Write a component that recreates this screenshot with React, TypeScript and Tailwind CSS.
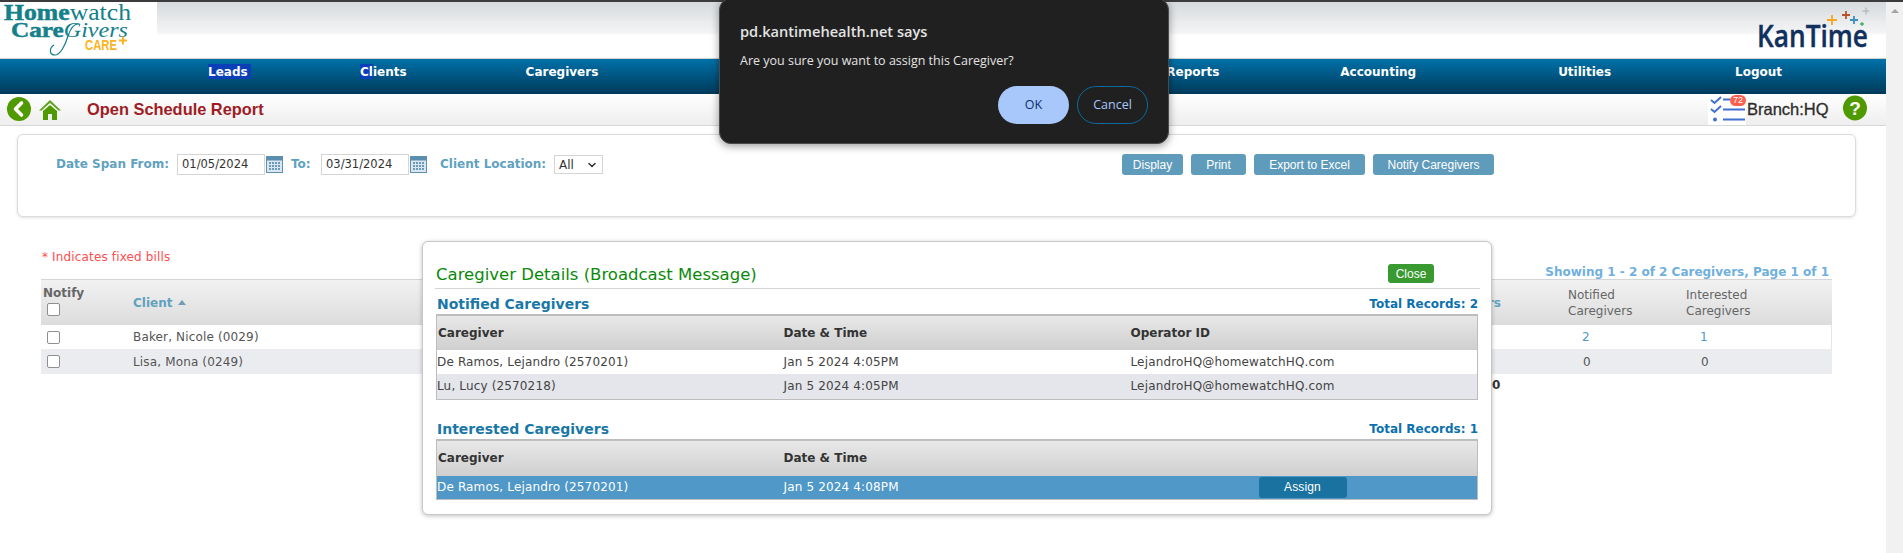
import React from "react";
import { ChevronDown } from "lucide-react";

const body = "font-['DejaVu_Sans',sans-serif]";

function HomewatchLogo() {
  return (
    <svg width="157" height="55" viewBox="0 0 157 55" className="block overflow-visible">
      <text x="4" y="17" fontFamily="Liberation Serif, serif" fontSize="23" fill="#14808a" textLength="127" lengthAdjust="spacingAndGlyphs">
        <tspan fontWeight="700" stroke="#14808a" strokeWidth="0.5">Home</tspan>
        <tspan>watch</tspan>
      </text>
      <text x="11" y="34" fontFamily="Liberation Serif, serif" fontSize="22" fill="#14808a" textLength="117" lengthAdjust="spacingAndGlyphs">
        <tspan fontWeight="700" stroke="#14808a" strokeWidth="0.5">Care</tspan>
        <tspan fontStyle="italic" fontSize="21">Givers</tspan>
      </text>
      <path d="M78 21 C73 21 70 27 68 33 C65 43 60 52 55 52 C49 52 49 45 54 42" fill="none" stroke="#14808a" strokeWidth="1.2" />
      <text x="85" y="47" fontFamily="Liberation Sans, sans-serif" fontSize="14" fontWeight="700" fill="#fbb322" textLength="32" lengthAdjust="spacingAndGlyphs">CARE</text>
      <path d="M119 37.5h8M123 33.5v8" stroke="#fbb322" strokeWidth="2" />
    </svg>
  );
}

function Plus({ x, y, s, c, w }: { x: number; y: number; s: number; c: string; w: number }) {
  return <path d={`M${x - s} ${y}h${2 * s}M${x} ${y - s}v${2 * s}`} stroke={c} strokeWidth={w} fill="none" />;
}

function KanTimeLogo() {
  return (
    <svg width="128" height="55" viewBox="0 0 128 55" className="block overflow-visible">
      <Plus x={74} y={18} s={5} c="#f5a623" w={1.8} />
      <Plus x={88} y={13} s={4} c="#b8532c" w={1.8} />
      <Plus x={96} y={18} s={4} c="#3d8fc0" w={1.8} />
      <Plus x={104} y={22} s={2} c="#42b06a" w={1.3} />
      <Plus x={108} y={9} s={3.5} c="#bcbcbc" w={1.5} />
      <text x="-1" y="45" fontFamily="Open Sans, sans-serif" fontSize="30" fontWeight="600" fill="#12305e" stroke="#12305e" strokeWidth="0.4" textLength="111" lengthAdjust="spacingAndGlyphs">KanTime</text>
    </svg>
  );
}

function CalendarIcon() {
  return (
    <svg width="17" height="17" viewBox="0 0 17 17" className="shrink-0 block">
      <rect x="0.5" y="0.5" width="16" height="16" fill="#dbe7f0" stroke="#5f8fae" />
      <rect x="1" y="1" width="15" height="3.5" fill="#5a8db0" />
      {[6, 9, 12].map((y) =>
        [3, 6, 9, 12].map((x) => <rect key={`${x}-${y}`} x={x} y={y} width="2" height="2" fill="#6b9aba" />)
      )}
    </svg>
  );
}

function Check({ className = "" }: { className?: string }) {
  return <span className={`block w-[13px] h-[13px] rounded-[2px] border border-[#8f8f8f] bg-white ${className}`} />;
}

function Btn({ w, children }: { w: string; children: React.ReactNode }) {
  return (
    <button className={`${w} h-[21px] rounded-[3px] bg-[#5f9cbb] text-white text-[12px] font-['Liberation_Sans',sans-serif] flex items-center justify-center`}>
      {children}
    </button>
  );
}

function Nav() {
  return (
    <nav className="h-[35px] bg-gradient-to-b from-[#0071a9] to-[#003a5a] flex text-white text-[12px] font-bold pt-[7px] leading-none">
      <span className="ml-[208px] w-[43px] h-[15px] -mt-[2px] pt-[2px] bg-[#0b3fb8]">Leads</span>
      <span className="ml-[109px] relative -mt-[2px] pt-[2px] h-[15px]">
        <span className="absolute left-0 top-0 w-[13px] h-[15px] bg-[#0b3fb8]" />
        <span className="relative">Clients</span>
      </span>
      <span className="ml-[119px]">Caregivers</span>
      <span className="ml-[568px]">Reports</span>
      <span className="ml-[121px]">Accounting</span>
      <span className="ml-[142px]">Utilities</span>
      <span className="ml-[124px]">Logout</span>
    </nav>
  );
}

function SubHeader() {
  return (
    <div className="h-[32px] bg-gradient-to-b from-white to-[#eeeeee] border-b border-[#d8d8d8] flex items-center font-['Liberation_Sans',sans-serif]">
      <svg width="24" height="24" viewBox="0 0 24 24" className="ml-[7px] shrink-0 mt-[-1px]">
        <circle cx="12" cy="12" r="12" fill="#4f9a00" />
        <path d="M14.5 6 L8.5 12 L14.5 18" fill="none" stroke="#fff" strokeWidth="3.6" strokeLinecap="round" strokeLinejoin="round" />
      </svg>
      <svg width="22" height="22" viewBox="0 0 22 22" className="ml-[8px] shrink-0">
        <path d="M11 1 L22 11.5 L19.5 11.5 L11 4 L2.5 11.5 L0 11.5 Z" fill="#5ea51d" />
        <path d="M4 12 L11 6 L18 12 V21 H13 V15 H9 V21 H4 Z" fill="#4f9a00" />
      </svg>
      <span className="ml-[26px] text-[16.4px] font-bold text-[#a01c24] whitespace-nowrap">Open Schedule Report</span>
      <span className="ml-auto relative w-[38px] h-[31px] bg-white shrink-0">
        <svg width="38" height="31" viewBox="0 0 38 31" className="block">
          <path d="M3 6 L6.5 9 L13 3M3 15 L6.5 18 L13 12" fill="none" stroke="#3f6fd0" strokeWidth="2" />
          <path d="M15 5.5h7M15 15.5h22M15 25.5h22" stroke="#3f6fd0" strokeWidth="2" />
          <circle cx="7" cy="25.5" r="2" fill="#3f6fd0" />
        </svg>
        <span className="absolute left-[22px] top-[1px] w-[16px] h-[11px] rounded-full bg-[#ff5f4f] text-white text-[9px] leading-[11px] text-center">72</span>
      </span>
      <span className="ml-[1px] text-[16.5px] text-[#2c2c2c] w-[96px] shrink-0 whitespace-nowrap [-webkit-text-stroke:0.3px_#2c2c2c]">Branch:HQ</span>
      <svg width="24" height="26" viewBox="0 0 24 26" className="mr-[19px] shrink-0 -mt-[3px]">
        <ellipse cx="12" cy="13" rx="12" ry="12.5" fill="#4f9a00" />
        <text x="12" y="20" textAnchor="middle" fontFamily="Liberation Sans, sans-serif" fontWeight="700" fontSize="19" fill="#fff">?</text>
      </svg>
    </div>
  );
}

function Filter() {
  const label = "text-[12px] font-bold text-[#5fa2bf] whitespace-nowrap";
  const input = "w-[88px] h-[21px] border border-[#d5d5d5] bg-white text-[11.5px] text-[#333] flex items-center pl-[4px]";
  return (
    <section className="mx-[17px] mt-[8px] h-[83px] w-[1839px] rounded-[6px] border border-[#dcdcdc] shadow-[0_1px_3px_rgba(0,0,0,0.12)] bg-white pt-[19px] flex items-start">
      <span className={`${label} ml-[38px] w-[121px] leading-[21px]`}>Date Span From:</span>
      <span className={input}>01/05/2024</span>
      <span className="ml-[1px] mt-[2px]"><CalendarIcon /></span>
      <span className={`${label} ml-[8px] w-[30px] leading-[21px]`}>To:</span>
      <span className={input}>03/31/2024</span>
      <span className="ml-[1px] mt-[2px]"><CalendarIcon /></span>
      <span className={`${label} ml-[13px] w-[114px] leading-[21px]`}>Client Location:</span>
      <span className="w-[49px] h-[19px] mt-[1px] border border-[#d5d5d5] text-[12px] text-[#333] flex items-center justify-between pl-[4px] pr-[4px]">
        All <ChevronDown size={12} strokeWidth={3} />
      </span>
      <div className="ml-[519px] flex gap-[8px]">
        <Btn w="w-[61px]">Display</Btn>
        <Btn w="w-[55px]">Print</Btn>
        <Btn w="w-[111px]">Export to Excel</Btn>
        <Btn w="w-[121px]">Notify Caregivers</Btn>
      </div>
    </section>
  );
}

function MainTable() {
  const row = "flex items-center tracking-[0.15px]";
  return (
    <section className="relative mt-[32px] ml-[41px] w-[1791px] text-[12px] text-[#555]">
      <div className="flex justify-between items-end h-[30px]">
        <span className="text-[#ff4d4d] ml-[1px] mb-[13px] tracking-[0.15px]">* Indicates fixed bills</span>
        <span className="text-[#6fb0de] -mb-[2px] font-bold mr-[3px]">Showing 1 - 2 of 2 Caregivers, Page 1 of 1</span>
      </div>
      <div className="relative h-[46px] bg-gradient-to-b from-[#f2f2f2] to-[#dcdcdc] border-t border-[#d5d5d5] flex items-center text-[#666]">
        <div className="w-[92px] pl-[2px] self-start pt-[5px]">
          <div className="font-bold leading-[16px]">Notify</div>
          <Check className="ml-[4px] mt-[2px]" />
        </div>
        <span className="text-[#5fa2bf] font-bold">Client</span>
        <span className="ml-[6px] w-0 h-0 border-x-[4px] border-x-transparent border-b-[5px] border-b-[#6f9db3]" />
        <span className="absolute right-[331px] text-[#5fa2bf] font-bold whitespace-nowrap">Caregivers</span>
        <div className="ml-auto w-[118px] pl-[40px] leading-[16px] whitespace-nowrap">Notified<br />Caregivers</div>
        <div className="w-[118px] mr-[68px] pl-[40px] leading-[16px] whitespace-nowrap">Interested<br />Caregivers</div>
      </div>
      <div className={`${row} h-[24px] bg-white border-r border-[#e6e6e6]`}>
        <Check className="ml-[6px]" />
        <span className="ml-[73px]">Baker, Nicole (0029)</span>
        <span className="ml-auto w-[118px] text-center text-[#4f98c8]">2</span>
        <span className="w-[118px] mr-[68px] text-center text-[#4f98c8]">1</span>
      </div>
      <div className={`${row} h-[25px] bg-[#ebecf0]`}>
        <Check className="ml-[6px]" />
        <span className="ml-[73px]">Lisa, Mona (0249)</span>
        <span className="ml-auto w-[118px] text-center">0</span>
        <span className="w-[118px] mr-[68px] text-center">0</span>
      </div>
      <span className="absolute left-[1451px] top-[127px] text-[#333] font-bold">0</span>
    </section>
  );
}

type Row = { name: string; date: string; op?: string };

function SubTable({ title, total, op, rows, assign }: { title: string; total: string; op: boolean; rows: Row[]; assign?: boolean }) {
  return (
    <div>
      <div className="flex justify-between items-center h-[20px] pl-[2px] pr-[1px]">
        <span className="text-[14px] font-bold text-[#1a78a8] leading-none">{title}</span>
        <span className="text-[12px] font-bold text-[#0b70ae] leading-none">{total}</span>
      </div>
      <table className="w-[1042px] ml-[1px] border border-t-[2px] border-[#bdbdbd] border-collapse table-fixed text-[12px]">
        <thead>
          <tr className={`${assign ? "h-[36px]" : "h-[35px]"} bg-gradient-to-b from-[#e9e9e9] to-[#cfcfcf] text-[#333] text-left`}>
            <th className="w-[347px] pl-[1px] font-bold">Caregiver</th>
            <th className="w-[347px] font-bold">Date &amp; Time</th>
            <th className="font-bold">{op ? "Operator ID" : ""}</th>
          </tr>
        </thead>
        <tbody className="tracking-[0.15px]">
          {rows.map((r, i) => (
            <tr key={r.name} className={assign ? "h-[24px] bg-[#4f98c8] text-white" : i === 0 ? "h-[24px] bg-white text-[#444]" : "h-[25px] bg-[#e4e6eb] text-[#444]"}>
              <td>{r.name}</td>
              <td>{r.date}</td>
              <td>
                {assign ? (
                  <button className="ml-[128px] w-[88px] h-[21px] rounded-[3px] bg-[#1a72a0] text-white text-[12px] font-['Liberation_Sans',sans-serif] block">Assign</button>
                ) : (
                  r.op
                )}
              </td>
            </tr>
          ))}
        </tbody>
      </table>
    </div>
  );
}

function Modal() {
  return (
    <div className="absolute left-[422px] top-[241px] w-[1070px] h-[274px] bg-white rounded-[6px] border border-[#c8c8c8] shadow-[0_1px_4px_rgba(0,0,0,0.25)] pl-[12px] pr-[12px] text-[#444]">
      <div className="flex items-end h-[47px] border-b border-[#d4d4d4] pb-[3px] pl-[1px] -mr-[1px]">
        <span className="text-[16.5px] text-[#0a8a0a] leading-[20px] whitespace-nowrap">Caregiver Details (Broadcast Message)</span>
        <button className="ml-auto mr-[46px] mb-[2px] w-[46px] h-[19px] rounded-[3px] bg-[#389a30] text-white text-[12px] font-['Liberation_Sans',sans-serif]">Close</button>
      </div>
      <div className="pt-[5px]">
        <SubTable
          title="Notified Caregivers"
          total="Total Records: 2"
          op
          rows={[
            { name: "De Ramos, Lejandro (2570201)", date: "Jan 5 2024 4:05PM", op: "LejandroHQ@homewatchHQ.com" },
            { name: "Lu, Lucy (2570218)", date: "Jan 5 2024 4:05PM", op: "LejandroHQ@homewatchHQ.com" },
          ]}
        />
      </div>
      <div className="pt-[19px]">
        <SubTable
          title="Interested Caregivers"
          total="Total Records: 1"
          op={false}
          assign
          rows={[{ name: "De Ramos, Lejandro (2570201)", date: "Jan 5 2024 4:08PM" }]}
        />
      </div>
    </div>
  );
}

function BrowserDialog() {
  return (
    <div className="absolute left-[719px] -top-[2px] w-[450px] h-[146px] rounded-[12px] bg-[#202020] border border-[#4a4a4a] shadow-[0_2px_8px_rgba(0,0,0,0.4)] font-['Open_Sans',sans-serif] text-[#e3e3e3]">
      <div className="pl-[20px] pt-[21px] text-[14.6px] font-semibold leading-[22px]">pd.kantimehealth.net says</div>
      <div className="pl-[20px] pt-[9px] text-[12.5px] leading-[20px]">Are you sure you want to assign this Caregiver?</div>
      <div className="flex justify-end gap-[8px] pr-[20px] pt-[15px]">
        <button className="w-[71px] h-[38px] rounded-full bg-[#a8c7fa] text-[#062e6f] text-[12.5px] font-medium">OK</button>
        <button className="w-[71px] h-[38px] rounded-full border border-[#0b6a9e] text-[#a8c7fa] text-[12.5px] font-medium">Cancel</button>
      </div>
    </div>
  );
}

export default function App() {
  return (
    <div className={`relative w-[1903px] h-[553px] overflow-hidden bg-white flex ${body}`}>
      <main className="w-[1886px] shrink-0 relative">
        <div className="h-[2px] bg-[#3c3c3c]" />
        <header className="h-[57px] flex justify-between bg-[linear-gradient(to_bottom,#d6dadd,#f4f5f6_31px,#ffffff_33px)] border-b border-[#d0d0d0]">
          <div className="w-[157px] bg-white pt-[1px]"><HomewatchLogo /></div>
          <div className="w-[128px]"><KanTimeLogo /></div>
        </header>
        <Nav />
        <SubHeader />
        <Filter />
        <MainTable />
        <Modal />
      </main>
      <aside className="w-[17px] bg-[#f1f1f1] relative shrink-0">
        <div className="h-[2px] bg-[#3c3c3c]" />
        <span className="absolute left-[5px] top-[9px] w-0 h-0 border-x-[4px] border-x-transparent border-b-[4px] border-b-[#a3a3a3]" />
      </aside>
      <BrowserDialog />
    </div>
  );
}
